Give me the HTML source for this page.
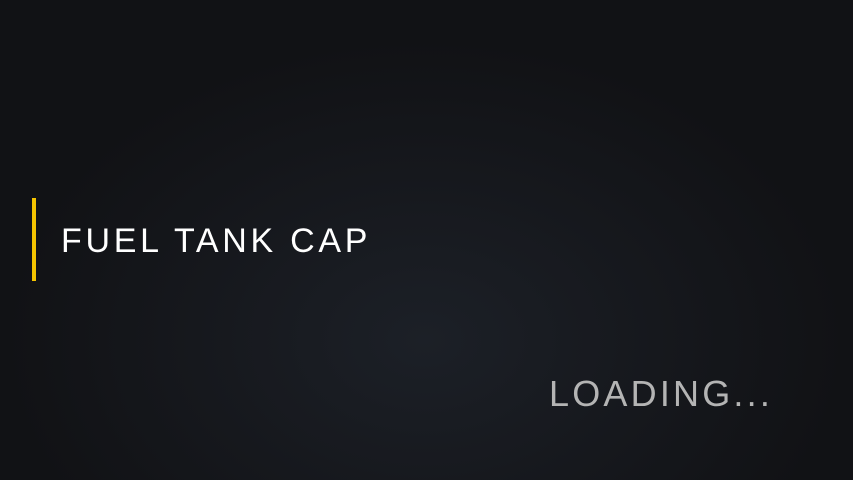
<!DOCTYPE html>
<html><head><meta charset="utf-8"><style>
html,body{margin:0;padding:0}
body{width:853px;height:480px;overflow:hidden;position:relative;
background:radial-gradient(ellipse 420px 300px at 425px 340px,#1c2027 0%,#16181d 55%,#111215 100%);
font-family:"Liberation Sans",sans-serif}
.bar{position:absolute;left:32px;top:198px;width:4px;height:83px;background:#f5c400}
.t{position:absolute;left:61px;top:222px;font-size:34px;line-height:38px;color:#fff;letter-spacing:3.7px;white-space:nowrap}
.l{position:absolute;left:549px;top:374px;font-size:36px;line-height:40px;color:#b4b4b4;letter-spacing:3.2px;white-space:nowrap}
</style></head><body>
<div class="bar"></div>
<div class="t">FUEL TANK CAP</div>
<div class="l">LOADING...</div>
</body></html>
